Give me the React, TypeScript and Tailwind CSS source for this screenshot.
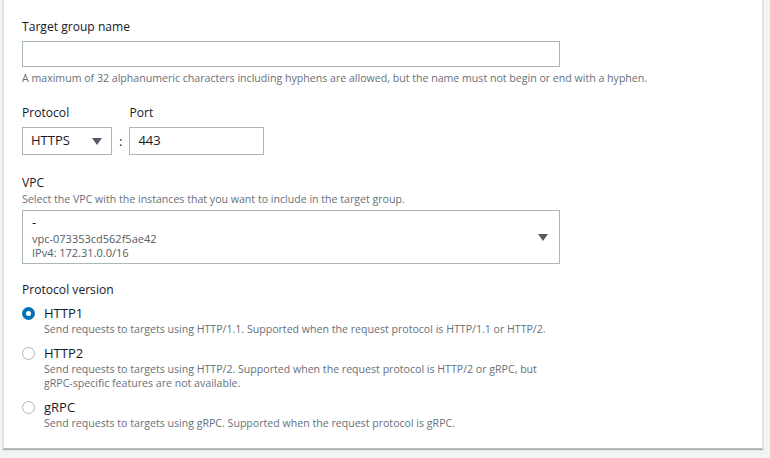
import React from "react";

const font = { fontFamily: '"Open Sans", "Noto Sans", Arial, sans-serif' };

function Radio({ checked }: { checked?: boolean }) {
  return checked ? (
    <span className="mt-[3px] flex h-[13px] w-[13px] shrink-0 items-center justify-center rounded-full bg-[#0073bb]">
      <span className="h-[5px] w-[5px] rounded-full bg-white" />
    </span>
  ) : (
    <span className="mt-[3px] h-[13px] w-[13px] shrink-0 rounded-full border border-[#aab7b8] bg-white" />
  );
}

function Caret() {
  return (
    <svg width="10" height="7" viewBox="0 0 10 7">
      <path d="M0 0h10L5 7z" fill="#545b64" />
    </svg>
  );
}

export default function App() {
  return (
    <div className="h-[458px] w-[770px] overflow-hidden bg-[#f2f3f3] text-[#16191f]" style={font}>
      <div className="ml-[3px] mt-[-4px] w-[760px] border border-[#dfe2e2] border-b-[#b8c0c0] bg-white pb-[18px] pl-[18px] pt-[20px] shadow-[0_1px_1px_0_rgba(0,28,36,0.3)]">
        <div className="text-[12.1px] leading-[20px]">Target group name</div>
        <div className="mt-[4px] h-[26px] w-[538px] border border-[#aab7b8] bg-white" />
        <div className="mt-[3px] text-[10.6px] leading-[16px] text-[#687078]">
          A maximum of 32 alphanumeric characters including hyphens are allowed, but the name must not begin or end with a hyphen.
        </div>

        <div className="mt-[16px] flex">
          <div className="flex flex-col">
            <div className="text-[12.1px] leading-[22px]">Protocol</div>
            <div className="mt-[3px] flex h-[28px] w-[90px] items-center justify-between border border-[#aab7b8] pl-[8px] pr-[9px] text-[13px]">
              <span>HTTPS</span>
              <Caret />
            </div>
          </div>
          <div className="flex flex-col justify-end pb-[4px]">
            <span className="mx-[7px] text-[13px] leading-[20px]">:</span>
          </div>
          <div className="flex flex-col">
            <div className="text-[12.1px] leading-[22px]">Port</div>
            <div className="mt-[3px] flex h-[28px] w-[135px] items-center border border-[#aab7b8] pl-[8px] text-[13px]">
              443
            </div>
          </div>
        </div>

        <div className="mt-[19px] text-[12.1px] leading-[18px]">VPC</div>
        <div className="text-[10.6px] leading-[14px] text-[#687078]">
          Select the VPC with the instances that you want to include in the target group.
        </div>
        <div className="mt-[4px] flex h-[54px] w-[538px] items-center justify-between border border-[#aab7b8] pl-[9px] pr-[11px]">
          <div className="flex flex-col text-[11px] leading-[14px] text-[#545b64]">
            <span className="text-[13px] leading-[15px] text-[#16191f]">-</span>
            <span className="mt-[2px]">vpc-073353cd562f5ae42</span>
            <span>IPv4: 172.31.0.0/16</span>
          </div>
          <Caret />
        </div>

        <div className="mt-[16px] text-[12.1px] leading-[20px]">Protocol version</div>
        <div className="mt-[4px] flex flex-col gap-[8px]">
          <div className="flex gap-[9px]">
            <Radio checked />
            <div>
              <div className="text-[13px] leading-[18px]">HTTP1</div>
              <div className="text-[10.6px] leading-[14px] text-[#687078]">
                Send requests to targets using HTTP/1.1. Supported when the request protocol is HTTP/1.1 or HTTP/2.
              </div>
            </div>
          </div>
          <div className="flex gap-[9px]">
            <Radio />
            <div>
              <div className="text-[13px] leading-[18px]">HTTP2</div>
              <div className="w-[500px] text-[10.6px] leading-[14px] text-[#687078]">
                Send requests to targets using HTTP/2. Supported when the request protocol is HTTP/2 or gRPC, but gRPC-specific features are not available.
              </div>
            </div>
          </div>
          <div className="flex gap-[9px]">
            <Radio />
            <div>
              <div className="text-[13px] leading-[18px]">gRPC</div>
              <div className="text-[10.6px] leading-[14px] text-[#687078]">
                Send requests to targets using gRPC. Supported when the request protocol is gRPC.
              </div>
            </div>
          </div>
        </div>
      </div>
    </div>
  );
}
